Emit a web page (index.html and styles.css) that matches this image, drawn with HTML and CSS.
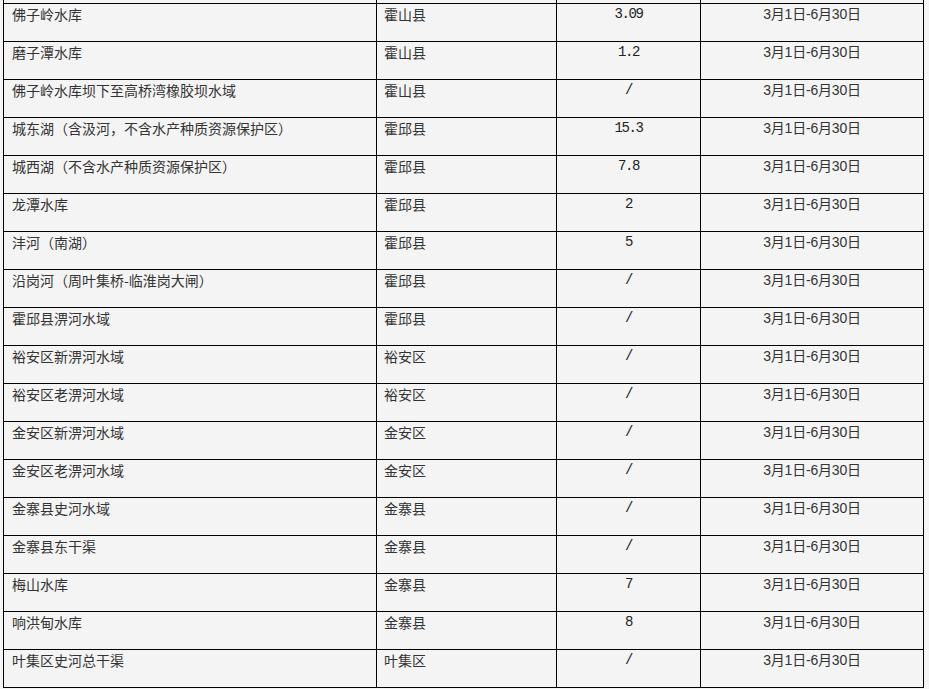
FILE: index.html
```html
<!DOCTYPE html>
<html lang="zh-CN">
<head>
<meta charset="utf-8">
<title>水域禁渔期</title>
<link rel="stylesheet" href="styles.css">
</head>
<body>
<table class="grid">
  <colgroup>
    <col class="c-name">
    <col class="c-county">
    <col class="c-area">
    <col class="c-date">
  </colgroup>
  <tbody>
    <tr class="stub"><td></td><td></td><td></td><td></td></tr>
    <tr><td class="name">佛子岭水库</td><td class="county">霍山县</td><td class="num">3.09</td><td class="date">3月1日-6月30日</td></tr>
    <tr><td class="name">磨子潭水库</td><td class="county">霍山县</td><td class="num">1.2</td><td class="date">3月1日-6月30日</td></tr>
    <tr><td class="name">佛子岭水库坝下至高桥湾橡胶坝水域</td><td class="county">霍山县</td><td class="num">/</td><td class="date">3月1日-6月30日</td></tr>
    <tr><td class="name">城东湖（含汲河，不含水产种质资源保护区）</td><td class="county">霍邱县</td><td class="num">15.3</td><td class="date">3月1日-6月30日</td></tr>
    <tr><td class="name">城西湖（不含水产种质资源保护区）</td><td class="county">霍邱县</td><td class="num">7.8</td><td class="date">3月1日-6月30日</td></tr>
    <tr><td class="name">龙潭水库</td><td class="county">霍邱县</td><td class="num">2</td><td class="date">3月1日-6月30日</td></tr>
    <tr><td class="name">沣河（南湖）</td><td class="county">霍邱县</td><td class="num">5</td><td class="date">3月1日-6月30日</td></tr>
    <tr><td class="name">沿岗河（周叶集桥-临淮岗大闸）</td><td class="county">霍邱县</td><td class="num">/</td><td class="date">3月1日-6月30日</td></tr>
    <tr><td class="name">霍邱县淠河水域</td><td class="county">霍邱县</td><td class="num">/</td><td class="date">3月1日-6月30日</td></tr>
    <tr><td class="name">裕安区新淠河水域</td><td class="county">裕安区</td><td class="num">/</td><td class="date">3月1日-6月30日</td></tr>
    <tr><td class="name">裕安区老淠河水域</td><td class="county">裕安区</td><td class="num">/</td><td class="date">3月1日-6月30日</td></tr>
    <tr><td class="name">金安区新淠河水域</td><td class="county">金安区</td><td class="num">/</td><td class="date">3月1日-6月30日</td></tr>
    <tr><td class="name">金安区老淠河水域</td><td class="county">金安区</td><td class="num">/</td><td class="date">3月1日-6月30日</td></tr>
    <tr><td class="name">金寨县史河水域</td><td class="county">金寨县</td><td class="num">/</td><td class="date">3月1日-6月30日</td></tr>
    <tr><td class="name">金寨县东干渠</td><td class="county">金寨县</td><td class="num">/</td><td class="date">3月1日-6月30日</td></tr>
    <tr><td class="name">梅山水库</td><td class="county">金寨县</td><td class="num">7</td><td class="date">3月1日-6月30日</td></tr>
    <tr><td class="name">响洪甸水库</td><td class="county">金寨县</td><td class="num">8</td><td class="date">3月1日-6月30日</td></tr>
    <tr><td class="name">叶集区史河总干渠</td><td class="county">叶集区</td><td class="num">/</td><td class="date">3月1日-6月30日</td></tr>
  </tbody>
</table>
</body>
</html>
```
FILE: styles.css
```css
html, body {
  margin: 0;
  padding: 0;
  background: #f4f4f4;
  overflow: hidden;
}

body {
  font-family: "Noto Sans CJK SC", "Noto Sans", sans-serif;
  font-size: 14px;
  color: #333;
}

.grid {
  margin-left: 3px;
  border-collapse: separate;
  border-spacing: 0;
  border-left: 1px solid #000;
  table-layout: fixed;
  width: 921px;
  background: #f4f4f4;
}

.c-name { width: 373px; }
.c-county { width: 180px; }
.c-area { width: 144px; }
.c-date { width: 223px; }

.grid td {
  box-sizing: border-box;
  border-right: 1px solid #000;
  border-bottom: 1px solid #000;
  padding: 0 6px 17px 8px;
  line-height: 20px;
  vertical-align: top;
  white-space: nowrap;
  overflow: hidden;
}

.grid .stub td {
  padding: 0;
  height: 4px;
  line-height: 0;
  font-size: 0;
}

.grid td.county {
  padding-left: 7px;
}

.grid td.num {
  text-align: center;
  padding-left: 0;
  padding-right: 0;
  font-family: "Liberation Mono", "DejaVu Sans Mono", monospace;
  font-size: 14px;
  letter-spacing: -1.4px;
  color: #222;
}

.grid td.date {
  text-align: center;
  padding-left: 0;
  padding-right: 0;
  font-family: "Liberation Sans", "Noto Sans CJK SC", sans-serif;
  letter-spacing: -0.2px;
}
```
